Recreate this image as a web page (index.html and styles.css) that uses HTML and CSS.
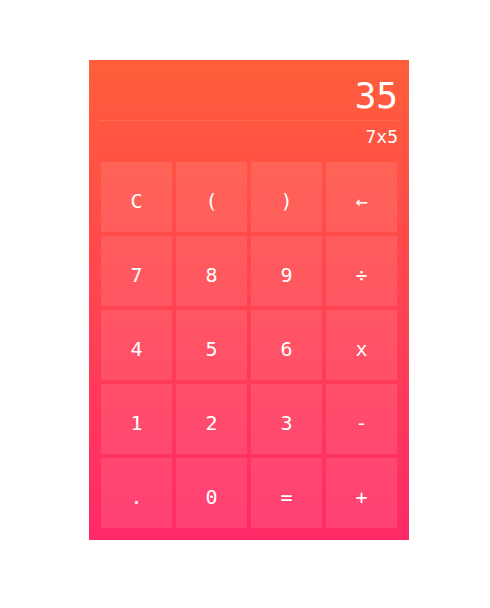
FILE: index.html
```html
<!DOCTYPE html>
<html>
<head>
<meta charset="utf-8">
<link rel="stylesheet" href="styles.css">
</head>
<body>
<div class="calc">
  <div class="display">
    <div class="result">35</div>
    <div class="expr">7x5</div>
  </div>
  <div class="keys">
    <div class="key">C</div>
    <div class="key">(</div>
    <div class="key">)</div>
    <div class="key">←</div>
    <div class="key">7</div>
    <div class="key">8</div>
    <div class="key">9</div>
    <div class="key">÷</div>
    <div class="key">4</div>
    <div class="key">5</div>
    <div class="key">6</div>
    <div class="key">x</div>
    <div class="key">1</div>
    <div class="key">2</div>
    <div class="key">3</div>
    <div class="key">-</div>
    <div class="key">.</div>
    <div class="key">0</div>
    <div class="key">=</div>
    <div class="key">+</div>
  </div>
</div>
</body>
</html>
```
FILE: styles.css
```css
html, body {
  margin: 0;
  padding: 0;
  background: #ffffff;
}
body {
  padding-top: 60px;
  padding-left: 89px;
  font-family: "DejaVu Sans Mono", "Liberation Mono", monospace;
  color: #ffffff;
}
.calc {
  width: 320px;
  height: 480px;
  background: linear-gradient(to bottom, #ff5e3a, #ff2a68);
  display: flex;
  flex-direction: column;
}
.display {
  margin: 0 11px 0 10px;
  text-align: right;
}
.result {
  height: 36px;
  font-size: 36px;
  line-height: 36px;
  padding: 18px 0 6px;
  border-bottom: 1px solid rgba(255, 255, 255, 0.1);
}
.expr {
  font-size: 18px;
  line-height: 18px;
  padding-top: 7px;
  height: 18px;
}
.keys {
  margin-top: 16px;
  padding: 0 12px;
  display: grid;
  grid-template-columns: repeat(4, 71px);
  grid-auto-rows: 70px;
  gap: 4px;
}
.key {
  background: rgba(255, 255, 255, 0.1);
  display: flex;
  align-items: center;
  justify-content: center;
  font-size: 20px;
  line-height: 20px;
  padding-top: 8px;
  box-sizing: border-box;
}
```
